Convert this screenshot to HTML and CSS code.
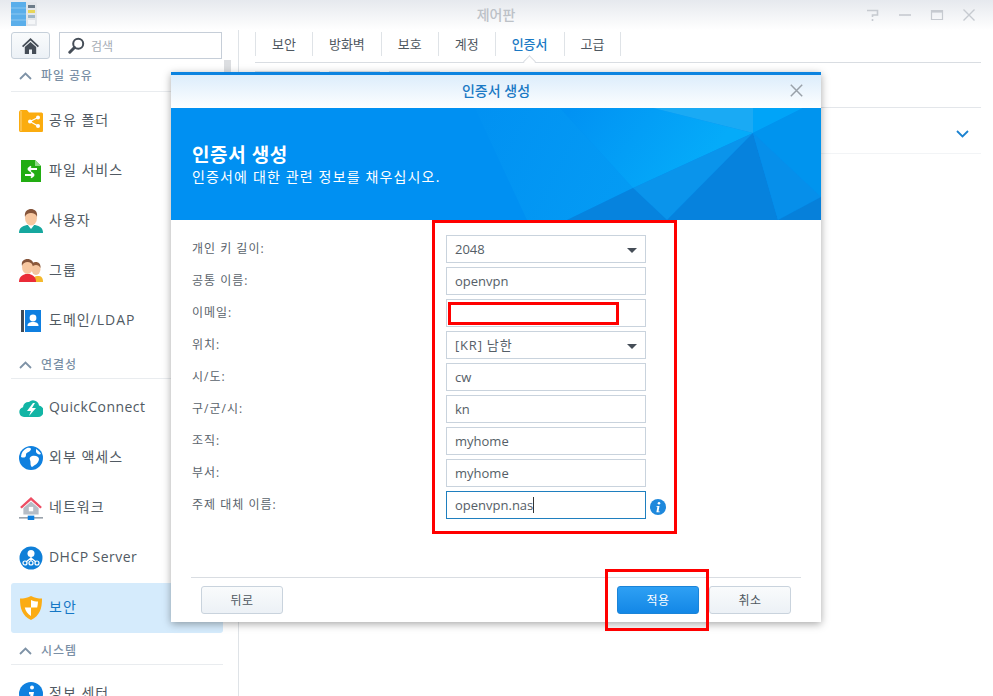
FILE: index.html
```html
<!DOCTYPE html>
<html lang="ko">
<head>
<meta charset="utf-8">
<title>제어판</title>
<link rel="stylesheet" href="styles.css">
</head>
<body>
<div class="app">
  <header class="titlebar">
    <svg class="app-logo" width="26" height="24" viewBox="0 0 26 24"><rect x="0" y="0" width="26" height="24" rx="1" fill="#e3e6ea"/><rect x="0" y="0" width="15" height="24" fill="#5aaeea"/><path d="M0 6h15M0 12h15M0 18h15" stroke="#8cc7f0" stroke-width="1"/><rect x="17" y="3" width="7" height="3" fill="#6d7c89"/><rect x="17" y="8" width="7" height="3" fill="#e8d65a"/><rect x="17" y="13" width="7" height="3" fill="#9fb6c7"/><rect x="17" y="18" width="7" height="4" fill="#f4f6f8"/></svg>
    <div class="title">제어판</div>
    <div class="win-controls">
      <svg width="14" height="14" viewBox="0 0 14 14"><path d="M1 2.500h10.500v4.500h-5v2M6.500 11v2" fill="none" stroke="#c6cad0" stroke-width="1.600"/></svg>
      <svg width="14" height="14" viewBox="0 0 14 14"><path d="M1 7h12" stroke="#c6cad0" stroke-width="1.600"/></svg>
      <svg width="14" height="14" viewBox="0 0 14 14"><path d="M1.500 2.500h11v9h-11z" fill="none" stroke="#c6cad0" stroke-width="1.200"/><path d="M1.500 3.500h11" stroke="#c6cad0" stroke-width="2.200"/></svg>
      <svg width="14" height="14" viewBox="0 0 14 14"><path d="M1.500 1.500l11 11M12.500 1.500l-11 11" stroke="#c6cad0" stroke-width="1.400"/></svg>
    </div>
  </header>
  <div class="workspace">
    <aside class="sidebar">
      <div class="tools">
        <button class="home-btn"><svg width="17" height="16" viewBox="0 0 17 16"><path d="M8.500 0L17 8l-1.200 1.300L8.500 2.600 1.200 9.300 0 8z" fill="#454d57"/><path d="M2.800 9l5.700-5.100L14.200 9v7H10v-4.500H7V16H2.800z" fill="#454d57"/></svg></button>
        <div class="search"><svg width="17" height="17" viewBox="0 0 17 17"><circle cx="10.200" cy="6.800" r="5" fill="none" stroke="#454d57" stroke-width="2"/><path d="M6.500 10.500L1.800 15.200" stroke="#454d57" stroke-width="3" stroke-linecap="round"/></svg><span>검색</span></div>
      </div>
      <div class="scroll-thumb"></div>
      <div class="sec sec-first"><svg class="caret" width="13" height="8" viewBox="0 0 13 8"><path d="M1 7l5.500-5.500L12 7" fill="none" stroke="#7e92a6" stroke-width="1.800"/></svg><span>파일 공유</span></div>
      <div class="item"><svg width="24" height="22" viewBox="0 0 24 22"><path d="M0 2.500C0 1 1 0 2 0h6l2 2.500h12c1 0 2 .5 2 1.500v16.500c0 1-.5 1.500-1.500 1.500H1.500C.5 22 0 21 0 20z" fill="#fbac0f"/><path d="M2 1v20" stroke="#fdd27c" stroke-width="1"/><circle cx="19" cy="7.500" r="2" fill="#fff"/><circle cx="19" cy="16" r="2" fill="#fff"/><circle cx="11" cy="11.500" r="2" fill="#fff"/><path d="M19 7.500l-8 4 8 4.500" stroke="#fff" stroke-width="1.200" fill="none"/></svg><span>공유 폴더</span></div>
      <div class="item"><svg width="24" height="22" viewBox="0 0 20 22"><path d="M0 0h14l6 6v16H0z" fill="#22ad12"/><path d="M14 0l6 6h-6z" fill="#8fd886"/><path d="M16 9H7M7 9l3-2.600M7 9l3 2.600M4 15h9M13 15l-3-2.600M13 15l-3 2.600" stroke="#fff" stroke-width="1.800" fill="none"/></svg><span>파일 서비스</span></div>
      <div class="item"><svg width="24" height="24" viewBox="0 0 24 24"><path d="M0 24c0-5 3-7 8-8h8c5 1 8 3 8 8z" fill="#16a79e"/><path d="M8 15l4 5 4-5z" fill="#fff"/><ellipse cx="12" cy="9" rx="6" ry="7.500" fill="#f7c7a0"/><path d="M6 8c-1-6 3-8 6-8s7 2 6 8c-1-3-3-4-6-4S7 5 6 8z" fill="#85543a"/></svg><span>사용자</span></div>
      <div class="item"><svg width="24" height="24" viewBox="0 0 24 24"><ellipse cx="17" cy="10" rx="4.500" ry="6" fill="#f4c49d"/><path d="M12.500 9c-.5-5 2-6 4.500-6s5 2 4.500 6c-1-2-2.500-3-4.500-3s-3.500 1-4.500 3z" fill="#8d5a3c"/><path d="M14 23c0-5 2-6 5-6s5 1 5 6z" fill="#f5b92c"/><path d="M0 23c0-5 3-7 6.500-8h4c3.500 1 6.500 3 6.500 8z" fill="#ea2b37"/><ellipse cx="8.500" cy="8" rx="5.500" ry="7" fill="#f7c7a0"/><path d="M3 7C2 2 5 0 8.500 0S15 2 14 7c-1-3-3-4-5.500-4S4 4 3 7z" fill="#85543a"/></svg><span>그룹</span></div>
      <div class="item"><svg width="24" height="22" viewBox="0 0 20 22"><rect x="0" y="0" width="3" height="22" fill="#3f4a56"/><rect x="4" y="0" width="16" height="22" fill="#0f7fe0"/><circle cx="12" cy="8" r="3.400" fill="#fff"/><path d="M6.500 16c0-3 2-4 5.500-4s5.500 1 5.500 4z" fill="#fff"/></svg><span>도메인/LDAP</span></div>
      <div class="sec"><svg class="caret" width="13" height="8" viewBox="0 0 13 8"><path d="M1 7l5.500-5.500L12 7" fill="none" stroke="#7e92a6" stroke-width="1.800"/></svg><span>연결성</span></div>
      <div class="item"><svg width="24" height="20" viewBox="0 0 24 20"><path d="M5 19a5 5 0 0 1-1-9.800A5.500 5.500 0 0 1 10 4a6 6 0 0 1 10 3.500 5.800 5.800 0 0 1-1 11.500z" fill="#12b5a5"/><path d="M14 5l-6 8h4l-2 5 7-8h-4l3-5z" fill="#fff"/></svg><span class="lat">QuickConnect</span></div>
      <div class="item"><svg width="24" height="24" viewBox="0 0 24 24"><circle cx="12" cy="12" r="12" fill="#0f80df"/><path d="M8 2c4-1 5 1 3 3s-4 1-4 4-3 3-5 2c0-4 2-7 6-9zM13 10c4-1 7 1 7 3s-2 5-4 6-3 3-4 1 0-4-1-6 0-3 2-4zM17 3c2 1 4 3 5 5-2 1-4 0-5-2z" fill="#fff"/></svg><span>외부 액세스</span></div>
      <div class="item"><svg width="24" height="24" viewBox="0 0 22 22"><path d="M11 1L1 10l1.500 1.500L11 4l8.500 7.500L21 10z" fill="#ee4d63"/><path d="M4 11l7-6 7 6v6H4z" fill="#b6bdc6"/><rect x="9" y="10" width="4" height="4" fill="#fff"/><path d="M0 20h22" stroke="#9aa3ac" stroke-width="1.500"/><rect x="8" y="18" width="6" height="4" fill="#0f80df"/></svg><span>네트워크</span></div>
      <div class="item"><svg width="24" height="24" viewBox="0 0 24 24"><circle cx="12" cy="12" r="11.500" fill="#0f7fd8"/><circle cx="12" cy="7.500" r="3.500" fill="#fff"/><path d="M12 10v5M12 12l-5 4M12 12l5 4" stroke="#fff" stroke-width="1.300"/><circle cx="6" cy="17" r="2" fill="none" stroke="#fff" stroke-width="1.200"/><circle cx="12" cy="17" r="2" fill="none" stroke="#fff" stroke-width="1.200"/><circle cx="18" cy="17" r="2" fill="none" stroke="#fff" stroke-width="1.200"/></svg><span class="lat">DHCP Server</span></div>
      <div class="item active"><svg width="24" height="24" viewBox="0 0 22 24"><path d="M11 0c4 2 7 2.500 11 2.500 0 10-2 17-11 21.500C2 19.500 0 12.500 0 2.500 4 2.500 7 2 11 0z" fill="#fbac14"/><path d="M11 4c2.500 1 4.500 1.500 7 1.600-.1 2-.3 4-.8 5.900H11zM11 11.500H4.800C5.500 15 7.500 18 11 20z" fill="#fff"/></svg><span>보안</span></div>
      <div class="sec sec-last"><svg class="caret" width="13" height="8" viewBox="0 0 13 8"><path d="M1 7l5.500-5.500L12 7" fill="none" stroke="#7e92a6" stroke-width="1.800"/></svg><span>시스템</span></div>
      <div class="item"><svg width="24" height="24" viewBox="0 0 24 24"><circle cx="12" cy="12" r="12" fill="#0f80df"/><circle cx="13" cy="5.500" r="2" fill="#fff"/><path d="M10 10h5l-2 10h-3l1.500-7.500H10z" fill="#fff"/></svg><span>정보 센터</span></div>
    </aside>
    <main class="main">
      <nav class="tabs">
        <a>보안</a><a>방화벽</a><a>보호</a><a>계정</a><a class="on">인증서</a><a>고급</a>
      </nav>
      <div class="tab-rule"><i class="notch"></i></div>
      <div class="subtabs"><i class="w1"></i><i class="w2"></i><i class="w3"></i></div>
      <div class="sub-rule"></div>
      <div class="chev-row"><svg width="13" height="8" viewBox="0 0 13 8"><path d="M1 1l5.500 5.500L12 1" fill="none" stroke="#1b82d1" stroke-width="1.800"/></svg></div>
    </main>
  </div>

  <section class="modal">
    <div class="m-head"><span>인증서 생성</span><svg class="m-close" width="13" height="13" viewBox="0 0 13 13"><path d="M.8.8l11.400 11.400M12.200.8L.8 12.200" stroke="#99a1a9" stroke-width="1.500"/></svg></div>
    <div class="banner">
      <svg class="banner-art" width="650" height="112" viewBox="0 0 650 112">
        <defs>
          <linearGradient id="lit" gradientUnits="userSpaceOnUse" x1="400" y1="0" x2="510" y2="85"><stop offset="0" stop-color="#0192f3"/><stop offset="1" stop-color="#05abf9"/></linearGradient>
          <linearGradient id="side" gradientUnits="userSpaceOnUse" x1="304" y1="0" x2="462" y2="80"><stop offset="0" stop-color="#0191f2"/><stop offset="1" stop-color="#049bf4"/></linearGradient>
        </defs>
        <path d="M304 0H389L462 80 396 112H356z" fill="url(#side)"/>
        <path d="M389 0H482L582 25 462 80z" fill="url(#lit)"/>
        <path d="M482 0H582V25z" fill="#1aaaf4"/>
        <path d="M582 0H632L582 25z" fill="#00a4f8"/>
        <path d="M632 0H650V89L582 25z" fill="#0094ee"/>
        <path d="M582 25L462 80 496 112z" fill="#0a94eb"/>
        <path d="M462 80L396 112H496z" fill="#0683de"/>
        <path d="M582 25L496 112H607z" fill="#0682dd"/>
        <path d="M582 25L607 112 650 89z" fill="#068fea"/>
        <path d="M650 89L607 112H650z" fill="#0680da"/>
      </svg>
      <h1>인증서 생성</h1>
      <p>인증서에 대한 관련 정보를 채우십시오.</p>
    </div>
    <form class="form">
      <label>개인 키 길이:</label><div class="field select">2048<i class="tri"></i></div>
      <label>공통 이름:</label><div class="field">openvpn</div>
      <label>이메일:</label><div class="field"></div>
      <label>위치:</label><div class="field select"><span class="kr">[KR] 남한</span><i class="tri"></i></div>
      <label>시/도:</label><div class="field">cw</div>
      <label>구/군/시:</label><div class="field">kn</div>
      <label>조직:</label><div class="field">myhome</div>
      <label>부서:</label><div class="field">myhome</div>
      <label>주제 대체 이름:</label><div class="field focus">openvpn.nas<b class="cursor"></b><svg class="info" width="16" height="16" viewBox="0 0 16 16"><circle cx="8" cy="8" r="8" fill="#1e88dc"/><circle cx="9" cy="4.200" r="1.300" fill="#fff"/><path d="M6.500 7h3l-1 5.500h1.200v.7H6.400l1-5.500h-1z" fill="#fff"/></svg></div>
    </form>
    <footer class="m-foot">
      <button class="btn">뒤로</button>
      <div class="m-foot-right"><button class="btn primary">적용</button><button class="btn">취소</button></div>
    </footer>
  </section>

  <div class="mark mark-form"></div>
  <div class="mark mark-email"></div>
  <div class="mark mark-apply"></div>
</div>
</body>
</html>
```
FILE: styles.css
```css
* { box-sizing: border-box; }
html, body { margin: 0; height: 100%; overflow: hidden; background: #fff; }
body { font-family: "Open Sans", "Noto Sans CJK KR", sans-serif; color: #4f5861; font-size: 13px; }
.app { position: relative; width: 993px; height: 696px; overflow: hidden; }
.titlebar { height: 30px; display: flex; align-items: center; padding: 0 17px 0 11px; position: relative; background: linear-gradient(#e6e9ee, #fff); }
.app-logo { margin-top: -2px; }
.title { position: absolute; left: 0; right: 0; text-align: center; font-size: 14px; font-weight: 500; color: #bcc1c7; top: 4px; padding-right: 1px; }
.win-controls { margin-left: auto; display: flex; gap: 18px; margin-top: -1px; }
.workspace { display: flex; height: 666px; }
.sidebar { width: 239px; border-right: 1px solid #dfe3e7; padding: 2px 15px 0 11px; position: relative; flex: none; }
.tools { display: flex; gap: 9px; height: 28px; margin-bottom: 1px; }
.home-btn { width: 39px; height: 27px; padding: 0; border: 1px solid #c6d0da; border-radius: 3px; background: linear-gradient(#f9fbfc, #ecf1f6); display: flex; align-items: center; justify-content: center; }
.search { width: 163px; height: 27px; border: 1px solid #c6ced8; display: flex; align-items: center; gap: 6px; padding-left: 8px; color: #a6adb5; font-size: 12px; }
.scroll-thumb { position: absolute; left: 224px; top: 30px; width: 7px; height: 60px; background: #dcdee1; }
.sec { height: 33px; border-bottom: 1px solid #e9ecef; display: flex; align-items: center; gap: 9px; padding: 3px 0 0 8px; color: #7a8fa5; font-size: 12px; font-weight: 500; letter-spacing: .9px; }
.sec-first { height: 31px; padding: 0 0 2px 8px; }
.sec-last { height: 32px; padding-top: 2px; }
.sec-first + .item { margin-top: 3px; }
.caret { margin-top: 2px; }
.item { height: 50px; display: flex; align-items: center; gap: 6px; padding-left: 8px; font-size: 14px; color: #515a63; letter-spacing: 1px; border-radius: 3px; width: 212px; }
.item svg { flex: none; }
.item span { margin-top: -4px; }
.item .lat { letter-spacing: .45px; }
.sec + .item { margin-top: 4px; }
.item.active { background: #d5ebfc; color: #1577c5; }
.main { flex: 1; padding: 2px 12px 0 16px; min-width: 0; }
.tabs { display: flex; height: 24px; }
.tabs a { padding: 0 16px; line-height: 25px; border-left: 1px solid #dfe3e7; font-size: 13px; color: #4f5861; }
.tabs a:last-child { border-right: 1px solid #dfe3e7; }
.tabs a.on { color: #1a79c4; font-weight: 500; }
.tab-rule { position: relative; height: 1px; margin-top: 6px; background: #d9dde2; }
.notch { position: absolute; left: 270px; top: -5px; width: 9px; height: 9px; background: #fff; border-left: 1px solid #d9dde2; border-top: 1px solid #d9dde2; transform: rotate(45deg); }
.subtabs { display: flex; gap: 9px; height: 2px; margin-top: 8px; }
.subtabs i { background: #dbe5ee; height: 2px; }
.w1 { width: 65px; } .w2 { width: 51px; } .w3 { width: 51px; }
.sub-rule { height: 1px; margin-top: 34px; background: #e3e6ea; }
.chev-row { height: 46px; border-bottom: 1px solid #f2f4f6; display: flex; align-items: center; justify-content: flex-end; padding: 6px 12px 0 0; }
.modal { position: absolute; left: 171px; top: 72px; width: 650px; height: 550px; background: #fff; border-top: 3px solid #0b83e0; box-shadow: 0 2px 8px rgba(0,0,0,.35); display: flex; flex-direction: column; }
.m-head { height: 33px; flex: none; background: linear-gradient(#dcedfb, #fdfeff); display: flex; align-items: center; justify-content: center; position: relative; color: #1a79c4; font-size: 14px; font-weight: 500; padding-bottom: 3px; }
.m-close { position: absolute; right: 18px; top: 9px; }
.banner { height: 112px; flex: none; background: #0090f2; color: #fff; position: relative; overflow: hidden; padding: 35px 0 0 21px; }
.banner-art { position: absolute; left: 0; top: 0; }
.banner h1 { position: relative; margin: 0; font-size: 19px; font-weight: 700; line-height: 24px; letter-spacing: .6px; }
.banner p { position: relative; margin: 0; font-size: 14px; line-height: 20px; letter-spacing: 1.15px; }
.form { display: grid; grid-template-columns: 254px 200px; grid-auto-rows: 28px; row-gap: 4px; padding: 15px 0 0 21px; align-items: start; flex: 1; }
.form label { font-size: 12px; line-height: 28px; color: #5a636c; letter-spacing: 1px; }
.field { height: 28px; border: 1px solid #c9d3dd; font-size: 13px; line-height: 26px; padding-left: 8px; position: relative; color: #555e67; }
.field .kr { letter-spacing: .8px; }
.field.focus { border-color: #1f7fbf; }
.tri { position: absolute; right: 8px; top: 12px; width: 0; height: 0; border-left: 5px solid transparent; border-right: 5px solid transparent; border-top: 5px solid #454d57; }
.cursor { display: inline-block; width: 1px; height: 16px; background: #333; vertical-align: -3px; }
.info { position: absolute; left: 203px; top: 7px; }
.m-foot { height: 45px; margin: 0 20px; border-top: 1px solid #d9dde2; display: flex; justify-content: space-between; padding: 8px 10px 0; flex: none; }
.m-foot-right { display: flex; gap: 10px; }
.btn { width: 82px; height: 28px; padding: 0; border: 1px solid #c9d3dd; border-radius: 3px; background: linear-gradient(#f9fbfc, #ecf1f6); font: inherit; font-size: 12px; color: #4f5861; letter-spacing: .4px; }
.btn.primary { background: linear-gradient(#2ea0f4, #1387e6); border-color: #1b84d8; color: #fff; }
.mark { position: absolute; border: 3px solid #f00; }
.mark-form { left: 432px; top: 220px; width: 245px; height: 314px; }
.mark-email { left: 448px; top: 302px; width: 171px; height: 23px; }
.mark-apply { left: 605px; top: 569px; width: 104px; height: 62px; }
```
